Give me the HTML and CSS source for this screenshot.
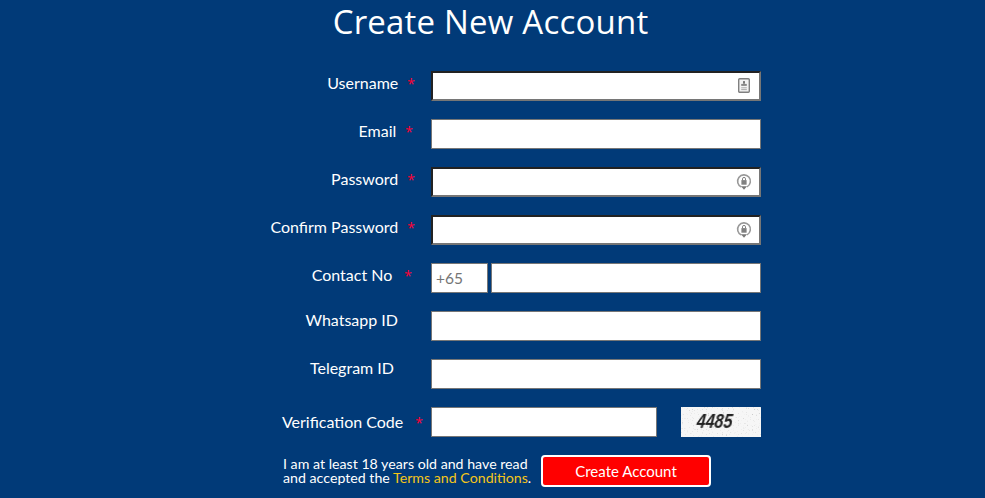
FILE: index.html

```html
<!DOCTYPE html>
<html lang="en">
<head>
    <meta charset="UTF-8">
    <meta name="viewport" content="width=device-width, initial-scale=1.0">
    <title>Create New Account</title>
    <link rel="stylesheet" href="styles.css">
</head>
<body>
    <h1 class="title">Create New Account</h1>
    <form class="form">
        <div class="row">
            <label class="label">Username<span class="star">*</span></label>
            <div class="field">
                <input class="input input-inset" type="text">
                <svg class="field-icon" viewBox="0 0 16 16">
                    <rect x="2.7" y="1.2" width="10.6" height="13.6" rx="1" fill="#f2f2f2" stroke="#808080" stroke-width="1.4"/>
                    <rect x="7" y="3.6" width="2" height="2.6" fill="#777"/>
                    <rect x="5.2" y="6.4" width="5.6" height="2" fill="#888"/>
                    <rect x="5.2" y="9.8" width="5.6" height="1" fill="#aaa"/>
                    <rect x="5.2" y="11.6" width="5.6" height="1" fill="#aaa"/>
                </svg>
            </div>
        </div>
        <div class="row">
            <label class="label label-email">Email<span class="star">*</span></label>
            <div class="field"><input class="input" type="email"></div>
        </div>
        <div class="row">
            <label class="label">Password<span class="star">*</span></label>
            <div class="field">
                <input class="input input-inset" type="password">
                <svg class="field-icon" viewBox="0 0 16 16">
                    <path d="M5.4 13.6A6.4 6.4 0 1 1 11 13.4" fill="none" stroke="#999" stroke-width="1.6"/>
                    <path d="M8 16.2L5 12.8h6z" fill="#777"/>
                    <rect x="5.4" y="6.6" width="5.2" height="4.6" fill="#808080"/>
                    <path d="M6.5 6.6V5.4a1.5 1.5 0 0 1 3 0v1.2" fill="none" stroke="#808080"/>
                </svg>
            </div>
        </div>
        <div class="row">
            <label class="label">Confirm Password<span class="star">*</span></label>
            <div class="field">
                <input class="input input-inset" type="password">
                <svg class="field-icon" viewBox="0 0 16 16">
                    <path d="M5.4 13.6A6.4 6.4 0 1 1 11 13.4" fill="none" stroke="#999" stroke-width="1.6"/>
                    <path d="M8 16.2L5 12.8h6z" fill="#777"/>
                    <rect x="5.4" y="6.6" width="5.2" height="4.6" fill="#808080"/>
                    <path d="M6.5 6.6V5.4a1.5 1.5 0 0 1 3 0v1.2" fill="none" stroke="#808080"/>
                </svg>
            </div>
        </div>
        <div class="row">
            <label class="label label-contact">Contact No<span class="star star-wide">*</span></label>
            <div class="field field-phone">
                <input class="input input-code" type="text" value="+65">
                <input class="input" type="tel">
            </div>
        </div>
        <div class="row">
            <label class="label label-raised">Whatsapp ID</label>
            <div class="field"><input class="input" type="text"></div>
        </div>
        <div class="row">
            <label class="label label-raised label-telegram">Telegram ID</label>
            <div class="field"><input class="input" type="text"></div>
        </div>
        <div class="row">
            <label class="label label-code">Verification Code<span class="star star-wide">*</span></label>
            <div class="field field-captcha">
                <input class="input" type="text">
                <div class="captcha">
                    <svg class="captcha-noise" width="80" height="30">
                        <filter id="noise">
                            <feTurbulence type="fractalNoise" baseFrequency="0.8" numOctaves="2" seed="4"/>
                            <feColorMatrix values="0 0 0 0 0.45  0 0 0 0 0.45  0 0 0 0 0.45  0 0 0 2.4 -1.5"/>
                        </filter>
                        <rect width="80" height="30" fill="#f6f6f6"/>
                        <rect width="80" height="30" filter="url(#noise)"/>
                    </svg>
                    <span class="captcha-text">4485</span>
                </div>
            </div>
        </div>
        <div class="submit-row">
            <p class="terms">I am at least 18 years old and have read<br>and accepted the <a class="terms-link" href="#">Terms and Conditions</a>.</p>
            <button class="submit" type="button">Create Account</button>
        </div>
    </form>
</body>
</html>
```

FILE: styles.css

```css
body {
    margin: 0;
    height: 498px;
    overflow: hidden;
    background-color: #013a78;
    color: #fff;
    font-family: Lato, 'Open Sans', sans-serif;
}

.title {
    margin: 0;
    padding-right: 4px;
    height: 71px;
    box-sizing: border-box;
    font-family: 'Open Sans', sans-serif;
    font-size: 33px;
    line-height: 44px;
    font-weight: 400;
    text-align: center;
    letter-spacing: 0.2px;
}

.form {
    display: flex;
    flex-direction: column;
    gap: 18px;
}

.row {
    display: flex;
    height: 30px;
}

.label {
    width: 431px;
    box-sizing: border-box;
    padding-right: 16px;
    font-size: 16px;
    line-height: 24px;
    text-align: right;
    white-space: nowrap;
}

.label-email {
    padding-right: 18px;
}

.label-contact {
    padding-right: 19px;
}

.label-raised {
    padding-right: 33px;
    line-height: 18px;
}

.label-telegram {
    padding-right: 37px;
}

.label-code {
    padding-right: 8px;
    line-height: 30px;
}

.star {
    margin-left: 9px;
    color: #ff0033;
    font-family: 'Open Sans', sans-serif;
    font-size: 14px;
}

.star-wide {
    margin-left: 12px;
}

.field {
    position: relative;
    display: flex;
    width: 330px;
}

.field-phone {
    gap: 3px;
}

.field-captcha {
    gap: 24px;
}

.input {
    flex: 1;
    min-width: 0;
    height: 30px;
    box-sizing: border-box;
    margin: 0;
    padding: 0 4px;
    border: 1px solid #767676;
    border-radius: 0;
    background-color: #fff;
    font-family: inherit;
    font-size: 15.5px;
}

.input-inset {
    border-width: 2px;
    border-style: solid;
    border-color: #222 #767676 #767676 #222;
    padding-right: 30px;
}

.input-code {
    flex: 0 0 57px;
    color: #757575;
}

.field-icon {
    position: absolute;
    right: 9px;
    top: 6px;
    width: 16px;
    height: 17px;
}

.captcha {
    position: relative;
    flex: 0 0 80px;
    height: 30px;
    overflow: hidden;
}

.captcha-noise {
    display: block;
}

.captcha-text {
    position: absolute;
    left: 16px;
    top: 3px;
    color: #222;
    font-family: 'Liberation Sans', sans-serif;
    font-size: 20px;
    line-height: 22px;
    font-style: italic;
    font-weight: 700;
    transform: scaleX(0.8) skewX(-8deg);
    transform-origin: left center;
    filter: blur(0.4px);
}

.submit-row {
    display: flex;
    align-items: center;
    padding-left: 283px;
    height: 32px;
}

.terms {
    margin: 0;
    width: 258px;
    font-size: 14.2px;
    line-height: 14px;
}

.terms-link {
    color: #f5c518;
    text-decoration: none;
}

.submit {
    width: 170px;
    height: 32px;
    box-sizing: border-box;
    border: 2px solid #fff;
    border-radius: 4px;
    background-color: #ff0000;
    color: #fff;
    font-family: inherit;
    font-size: 15px;
    cursor: pointer;
}
```
